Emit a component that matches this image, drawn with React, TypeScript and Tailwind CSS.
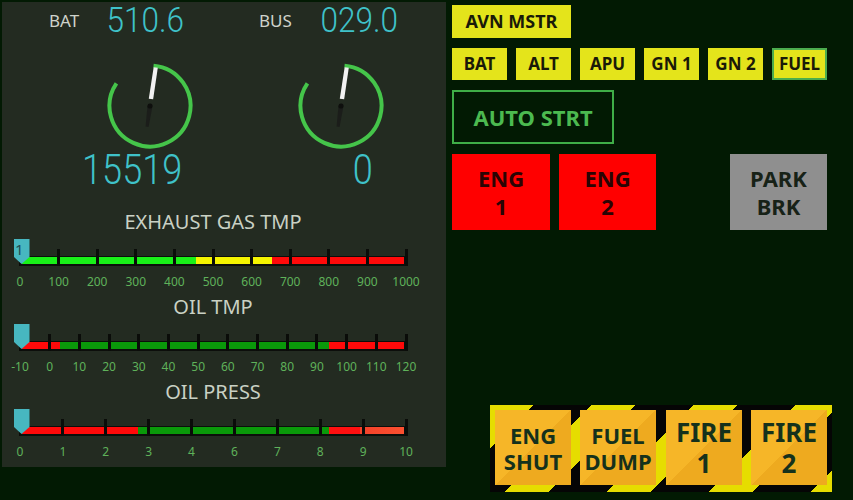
import React from 'react'

type BarSpec = {
  title: string
  labels: string[]
  fill: string
  marker?: string
}

const bars: BarSpec[] = [
  {
    title: 'EXHAUST GAS TMP',
    labels: ['0', '100', '200', '300', '400', '500', '600', '700', '800', '900', '1000'],
    fill: 'bg-[linear-gradient(to_right,#19f019_0%,#19f019_45.8%,#f4f400_45.8%,#f4f400_65.6%,#ff0a0a_65.6%,#ff0a0a_100%)]',
    marker: '1',
  },
  {
    title: 'OIL TMP',
    labels: ['-10', '0', '10', '20', '30', '40', '50', '60', '70', '80', '90', '100', '110', '120'],
    fill: 'bg-[linear-gradient(to_right,#ff0a0a_0%,#ff0a0a_10.1%,#0a990a_10.1%,#0a990a_80.3%,#ff0a0a_80.3%,#ff0a0a_100%)]',
  },
  {
    title: 'OIL PRESS',
    labels: ['0', '1', '2', '3', '4', '6', '7', '8', '9', '10'],
    fill: 'bg-[linear-gradient(to_right,#ff0a0a_0%,#ff0a0a_30.6%,#0a990a_30.6%,#0a990a_80.3%,#ff1010_80.3%,#ff1010_88.6%,#f5422a_88.6%,#fb5030_100%)]',
  },
]

function Gauge() {
  const r = 40.5
  const pt = (deg: number) => {
    const a = (deg * Math.PI) / 180
    return [45 + r * Math.sin(a), 45 - r * Math.cos(a)]
  }
  const [x1, y1] = pt(5)
  const [x2, y2] = pt(304)
  return (
    <svg width="90" height="90" viewBox="0 0 90 90" className="block">
      <path
        d={`M ${x1} ${y1} A ${r} ${r} 0 1 1 ${x2} ${y2}`}
        fill="none"
        stroke="#45c54a"
        strokeWidth="4"
      />
      <g transform="rotate(8 45 45)">
        <path d="M 42.5 45 L 47.5 45 L 46.5 66 L 43.5 66 Z" fill="#1b1d1a" />
        <path d="M 42.8 38 L 47.2 38 L 47.4 6 L 43.2 6 Z" fill="#f2f2f2" />
        <circle cx="45" cy="45" r="2.6" fill="#0e0f0d" />
      </g>
    </svg>
  )
}

function Segs({ value, big }: { value: string; big?: boolean }) {
  return (
    <span
      className={`inline-block whitespace-nowrap font-['Roboto',sans-serif] font-light leading-none text-[#3fc2c9] origin-right ${
        big ? 'text-[43px] scale-x-[0.84]' : 'text-[35px] scale-x-[0.9]'
      }`}
    >
      {value}
    </span>
  )
}

function Bar({ spec }: { spec: BarSpec }) {
  const n = spec.labels.length - 1
  return (
    <div className="flex flex-col">
      <div className="ml-[18px] w-[386px] h-[24px] text-center text-[20px] leading-[24px] text-[#c9d1c4]">
        {spec.title}
      </div>
      <div className="relative ml-[18px] w-[386px] h-[27px] mt-[5px] flex flex-col justify-end">
        <div className="relative h-[10px] bg-[#0c0e0b]">
          <div className={`ml-[1px] mr-[2px] mt-[1px] h-[7px] ${spec.fill}`} />
          {spec.labels.map((_, i) => (
            <div
              key={i}
              className="absolute bottom-0 h-[17px] w-[3px] -ml-[1.5px] bg-[#0a0c09]"
              style={{ left: `${(i / n) * 100}%` }}
            />
          ))}
        </div>
        <svg
          width="16"
          height="25"
          viewBox="0 0 16 25"
          className="absolute left-[-6px] top-0"
        >
          <polygon points="0,0 15.5,0 15.5,18 7.5,25 0,18" fill="#47b7c0" />
        </svg>
        {spec.marker && (
          <span className="absolute left-[-5px] top-[1px] text-[15px] leading-[18px] text-[#1f4d50]">
            {spec.marker}
          </span>
        )}
      </div>
      <div className="relative ml-[18px] w-[386px] h-[14px] mt-[9px]">
        {spec.labels.map((l, i) => (
          <span
            key={i}
            className="absolute top-0 -translate-x-1/2 text-[12px] leading-[14px] text-[#5fb25a]"
            style={{ left: `${(i / n) * 100}%` }}
          >
            {l}
          </span>
        ))}
      </div>
    </div>
  )
}

function YellowBtn({ label, w, h, ring }: { label: string; w: string; h: string; ring?: boolean }) {
  return (
    <div
      className={`${w} ${h} flex items-center justify-center bg-[#e4e41b] text-[#1a1a08] font-bold ${
        ring ? 'border-2 border-[#4cad4e]' : ''
      } ${label === 'AVN MSTR' ? 'text-[18px]' : 'text-[17px]'}`}
    >
      {label}
    </div>
  )
}

function HazardBtn({ lines, big }: { lines: string[]; big?: boolean }) {
  return (
    <div
      className={`w-[76px] h-[75px] flex flex-col items-center justify-center font-bold text-[#15311c] bg-[linear-gradient(to_bottom_right,#f6b628_50%,#eeaa1f_50%)] ${
        big ? 'text-[26px] leading-[31px]' : 'text-[22px] leading-[26px]'
      }`}
    >
      {lines.map((l) => (
        <span key={l}>{l}</span>
      ))}
    </div>
  )
}

export default function App() {
  return (
    <div className="w-[853px] h-[500px] overflow-hidden bg-[#021a03] flex items-start font-['Noto_Sans',sans-serif]">
      {/* Left instrument panel */}
      <div className="ml-[2px] mt-[2px] w-[444px] h-[465px] bg-[#232b21] flex flex-col">
        <div className="flex h-[36px]">
          <div className="ml-[47px] w-[135px] flex justify-between items-start">
            <span className="mt-[10px] text-[17px] leading-none text-[#cfd3cb]">BAT</span>
            <span className="mt-[1px]">
              <Segs value="510.6" />
            </span>
          </div>
          <div className="ml-[75px] w-[139px] flex justify-between items-start">
            <span className="mt-[10px] text-[17px] leading-none text-[#cfd3cb]">BUS</span>
            <span className="mt-[1px]">
              <Segs value="029.0" />
            </span>
          </div>
        </div>

        <div className="flex mt-[23px]">
          <div className="ml-[103px] w-[90px] flex flex-col">
            <Gauge />
            <div className="-mt-[3px] flex justify-end pr-[13px]">
              <Segs value="15519" big />
            </div>
          </div>
          <div className="ml-[101px] w-[90px] flex flex-col">
            <Gauge />
            <div className="-mt-[3px] flex justify-end pr-[13px]">
              <Segs value="0" big />
            </div>
          </div>
        </div>

        <div className="mt-[19px] flex flex-col gap-[6px]">
          {bars.map((b) => (
            <Bar key={b.title} spec={b} />
          ))}
        </div>
      </div>

      {/* Right switch column */}
      <div className="ml-[6px] pt-[5px] flex flex-col">
        <YellowBtn label="AVN MSTR" w="w-[119px]" h="h-[33px]" />
        <div className="mt-[10px] flex gap-[9px]">
          {['BAT', 'ALT', 'APU', 'GN 1', 'GN 2'].map((l) => (
            <YellowBtn key={l} label={l} w="w-[55px]" h="h-[32px]" />
          ))}
          <YellowBtn label="FUEL" w="w-[55px]" h="h-[32px]" ring />
        </div>
        <div className="mt-[10px] w-[162px] h-[54px] border-2 border-[#3fae47] flex items-center justify-center text-[22px] font-bold text-[#4cba50]">
          AUTO STRT
        </div>
        <div className="mt-[10px] flex h-[76px] text-[22px] leading-[28px] font-bold">
          <div className="w-[98px] bg-[#ff0000] text-[#2a0404] flex flex-col items-center justify-center">
            <span>ENG</span>
            <span>1</span>
          </div>
          <div className="ml-[9px] w-[97px] bg-[#ff0000] text-[#2a0404] flex flex-col items-center justify-center">
            <span>ENG</span>
            <span>2</span>
          </div>
          <div className="ml-[74px] w-[97px] bg-[#8f8f8f] text-[#172217] flex flex-col items-center justify-center">
            <span>PARK</span>
            <span>BRK</span>
          </div>
        </div>

        <div className="mt-[175px] ml-[38px] w-[342px] h-[87px] pl-[5px] pt-[5px] flex bg-[repeating-linear-gradient(135deg,#e6dd00_0px,#e6dd00_31px,#050505_31px,#050505_72px)]">
          <HazardBtn lines={['ENG', 'SHUT']} />
          <div className="ml-[9px]">
            <HazardBtn lines={['FUEL', 'DUMP']} />
          </div>
          <div className="ml-[10px]">
            <HazardBtn lines={['FIRE', '1']} big />
          </div>
          <div className="ml-[9px]">
            <HazardBtn lines={['FIRE', '2']} big />
          </div>
        </div>
      </div>
    </div>
  )
}
